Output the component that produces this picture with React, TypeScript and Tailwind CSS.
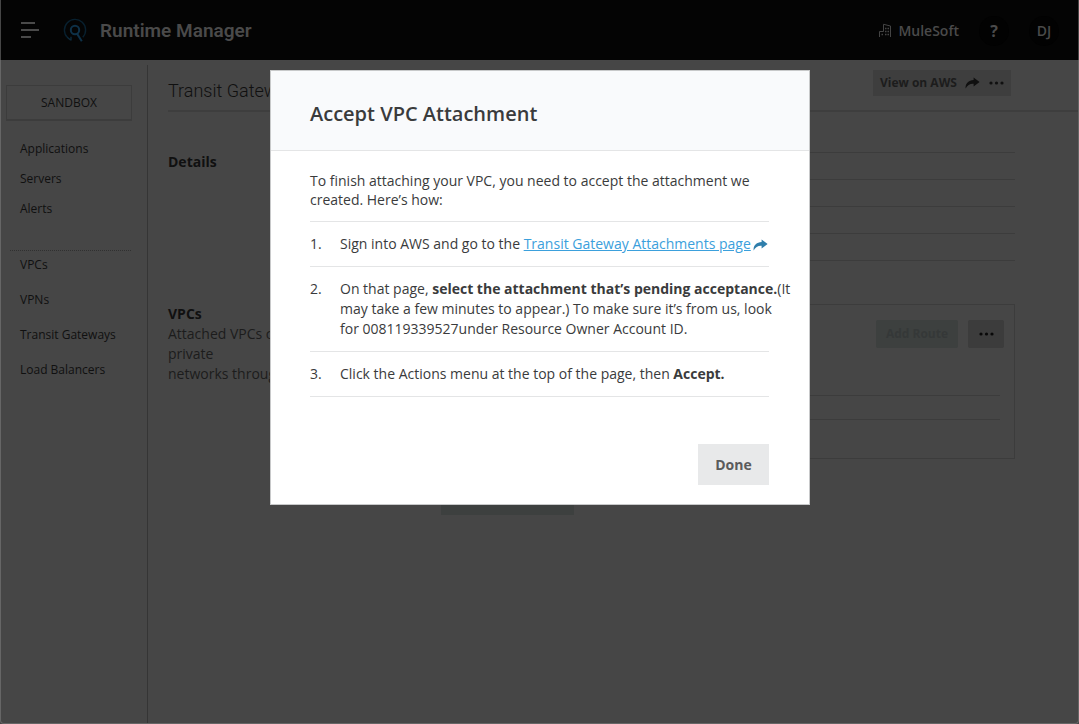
import type { ReactNode } from "react";

function Logo() {
  return (
    <svg width="24" height="24" viewBox="0 0 24 24" fill="none" aria-hidden="true">
      <path d="M4.6 19.6A10.6 10.6 0 1 1 19.8 19.2" stroke="#08202f" strokeWidth="1.4" />
      <path d="M4.2 19.2 7.3 21.8H8V18.8" stroke="#0c2a3c" strokeWidth="1.4" />
      <circle cx="12" cy="12" r="4.2" stroke="#0e3148" strokeWidth="2" />
      <path d="M14 15.6 18.8 23.2" stroke="#0e3148" strokeWidth="2" />
    </svg>
  );
}

function BuildingIcon() {
  return (
    <svg width="13" height="15" viewBox="0 0 13 15" fill="none" stroke="#444444" aria-hidden="true">
      <path d="M.5 14V8.5H4.5V1.3L11.5 3V14" />
      <path d="M6 5.5h1.5M8.5 5.5H10M6 8.5h1.5M8.5 8.5H10M2.5 11.5H4M6 11.5h1.5M8.5 11.5H10" strokeWidth="1.4" />
    </svg>
  );
}

function ShareArrow({ color }: { color: string }) {
  return (
    <svg width="15" height="12" viewBox="0 0 15 12" fill={color} aria-hidden="true" className="ml-0.5 inline-block shrink-0">
      <path d="M8.6.4 14.6 5 8.6 9.4V6.8C5 6.6 2.4 8 .6 11.6.2 6.4 3.6 3.2 8.6 3Z" />
    </svg>
  );
}

function Dots({ color }: { color: string }) {
  return (
    <svg width="15" height="4" viewBox="0 0 15 4" fill={color} aria-hidden="true">
      <circle cx="2" cy="2" r="1.6" />
      <circle cx="7.5" cy="2" r="1.6" />
      <circle cx="13" cy="2" r="1.6" />
    </svg>
  );
}

function Step({ n, children }: { n: number; children: ReactNode }) {
  return (
    <li className="flex border-b border-[#e4e5e6] py-3">
      <span className="w-[30px] shrink-0">{n}.</span>
      <div className="-mr-6 grow basis-0">{children}</div>
    </li>
  );
}

const primaryLinks = ["Applications", "Servers", "Alerts"];
const networkLinks = ["VPCs", "VPNs", "Transit Gateways", "Load Balancers"];

export default function App() {
  return (
    <div className="flex min-h-screen flex-col bg-[#464646] font-['Open_Sans',sans-serif] text-sm leading-5 text-[#1c1c1c]">
      <header className="mx-px flex h-[60px] items-center bg-[#040404] pr-[19px] pl-5 text-[#4a4a4a]">
        <button type="button" aria-label="Menu" className="mr-6 flex w-[18px] flex-col gap-[5px]">
          <span className="h-0.5 w-3.5 bg-current" />
          <span className="h-0.5 w-[18px] bg-current" />
          <span className="h-0.5 w-2.5 bg-current" />
        </button>
        <Logo />
        <span className="ml-[13px] pt-px font-['Roboto',sans-serif] text-[19px] font-semibold">Runtime Manager</span>
        <div className="ml-auto flex items-center pt-px font-semibold">
          <BuildingIcon />
          <span className="ml-1.5">MuleSoft</span>
          <button type="button" aria-label="Help" className="ml-5 size-[30px] rounded-full bg-[#020202] text-base font-bold">?</button>
          <button type="button" className="ml-5 size-[30px] rounded-full bg-[#020202] font-semibold">DJ</button>
        </div>
      </header>

      <div className="flex grow border-x border-b border-[#666666] rounded-b-sm">
        <aside className="mt-[5px] w-[147px] shrink-0 border-r border-[#353535] pt-5 text-xs text-[#101010]">
          <button type="button" className="ml-[5px] h-9 w-[126px] border border-b-2 border-[#3c3c3c]">SANDBOX</button>
          <nav>
            <ul className="mt-[13px] pl-[19px]">
              {primaryLinks.map((t) => (
                <li key={t} className="flex h-[30px] items-center"><a href="#">{t}</a></li>
              ))}
            </ul>
            <ul className="mt-[26px] mr-4 ml-[9px] border-t border-dotted border-[#303030] pl-2.5">
              {networkLinks.map((t) => (
                <li key={t} className="flex h-[35px] items-start pt-1.5"><a href="#">{t}</a></li>
              ))}
            </ul>
          </nav>
        </aside>

        <main className="min-w-0 grow">
          <div className="ml-5 flex h-[52px] items-start justify-between border-b-2 border-[#3e3e3e] pt-2.5 pr-[67px]">
            <h1 className="pt-[9px] font-['Roboto',sans-serif] text-lg font-light leading-6 text-[#101010]">Transit Gateway</h1>
            <div className="flex h-[26px] w-[138px] items-center justify-between bg-[#3e3e3e] px-[7px] text-xs font-bold">
              <a href="#" className="flex items-center gap-1.5">View on AWS <ShareArrow color="#101010" /></a>
              <button type="button" aria-label="More actions"><Dots color="#101010" /></button>
            </div>
          </div>
          <div className="mr-[63px] ml-5">
            <section className="flex pt-10">
              <h2 className="w-[273px] shrink-0 font-bold text-[#101010]">Details</h2>
              <div className="grow">
                <div className="border-b border-[#3c3c3c]" />
                {[0, 1, 2, 3].map((i) => (
                  <div key={i} className="h-[27px] border-b border-[#3c3c3c]" />
                ))}
              </div>
            </section>
            <section className="flex pt-[43px]">
              <div className="w-[273px] shrink-0">
                <h2 className="font-bold text-[#101010]">VPCs</h2>
                <p className="w-[180px]">Attached VPCs can access private<br />networks through this</p>
              </div>
              <div className="grow">
                <div className="h-[155px] border border-[#3c3c3c] px-2.5 pt-[15px]">
                  <div className="flex justify-end gap-2.5">
                    <button type="button" className="h-7 w-[82px] rounded-xs bg-[#3d403f] text-xs font-bold text-[#353838]">Add Route</button>
                    <button type="button" aria-label="More actions" className="flex h-7 w-9 items-center justify-center rounded-xs bg-[#3c3c3c]"><Dots color="#080808" /></button>
                  </div>
                  <div className="mr-1 h-12 border-b border-[#3c3c3c]" />
                  <div className="mr-1 h-6 border-b border-[#3c3c3c]" />
                </div>
                <div className="mt-5 h-9 w-[133px] bg-[#3d403f]" />
              </div>
            </section>
          </div>
        </main>
      </div>

      <div className="fixed inset-0 flex items-start justify-center pt-[70px] pl-px">
        <div role="dialog" aria-modal="true" aria-labelledby="dialog-title" className="w-full max-w-[540px] border border-[#c8c9ca] bg-white text-[#3a3b3c]">
          <div className="border-b border-[#e4e5e6] bg-[#f9fafc] pt-[31px] pr-10 pb-6 pl-[39px]">
            <h2 id="dialog-title" className="text-xl font-semibold leading-6">Accept VPC Attachment</h2>
          </div>
          <div className="pt-5 pr-10 pb-[19px] pl-[39px]">
            <p className="pb-3 leading-[19px]">To finish attaching your VPC, you need to accept the attachment we created. Here’s how:</p>
            <ol className="border-t border-[#e4e5e6]">
              <Step n={1}>
                Sign into AWS and go to the <a href="#" className="text-[#3ba0dc] underline">Transit Gateway Attachments page</a><ShareArrow color="#2f7eab" />
              </Step>
              <Step n={2}>
                On that page, <b>select the attachment that’s pending acceptance.</b>(It may take a few minutes to appear.) To make sure it’s from us, look for 008119339527under Resource Owner Account ID.
              </Step>
              <Step n={3}>Click the Actions menu at the top of the page, then <b>Accept.</b></Step>
            </ol>
            <div className="mt-[47px] flex justify-end">
              <button type="button" className="h-[41px] w-[71px] bg-[#e8e9ea] font-bold text-[#5a5b5c]">Done</button>
            </div>
          </div>
        </div>
      </div>
    </div>
  );
}
